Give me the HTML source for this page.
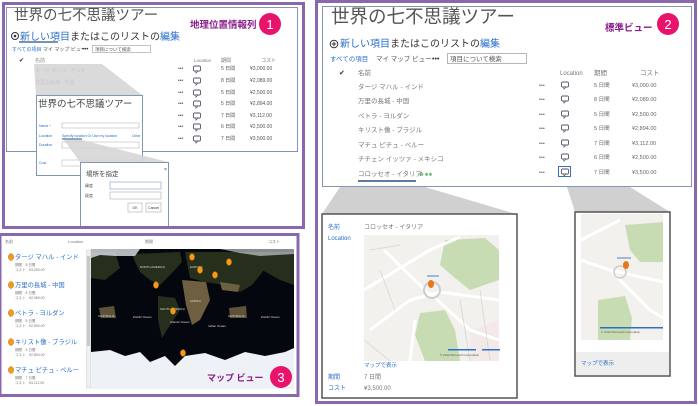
<!DOCTYPE html>
<html><head><meta charset="utf-8"><style>
html,body{margin:0;padding:0;background:#fff;}
svg{display:block;font-family:"Liberation Sans","Noto Sans CJK JP",sans-serif;}
</style></head><body>
<svg width="698" height="406" viewBox="0 0 698 406" xmlns="http://www.w3.org/2000/svg">
<defs>
<g id="bub"><rect x="-3.5" y="-3" width="7" height="5" rx="1" fill="#fff" stroke="#556" stroke-width="0.9"/><path d="M-1 2 L-1 4 L1 2" fill="#fff" stroke="#556" stroke-width="0.8"/></g>
<g id="pin"><ellipse cx="0" cy="0" rx="2.6" ry="3.4" fill="#f39a1a" stroke="#c06a00" stroke-width="0.5"/></g>
</defs>

<!-- ============ PANEL 1 ============ -->
<rect x="3.5" y="3.5" width="300" height="224" fill="#fff" stroke="#8a68ad" stroke-width="3"/>
<rect x="6.5" y="7.5" width="291" height="144" fill="#fff" stroke="#8494b4" stroke-width="1"/>
<text x="14" y="20" font-size="14.5" fill="#555">世界の七不思議ツアー</text>
<text x="190" y="28" font-size="9.5" font-weight="bold" fill="#8a1c8a">地理位置情報列</text>
<circle cx="270" cy="24" r="11" fill="#e8146c"/>
<text x="270" y="29" font-size="13" fill="#fff" text-anchor="middle">1</text>
<circle cx="15" cy="36" r="3.5" fill="none" stroke="#333" stroke-width="1"/><circle cx="15" cy="36" r="1.3" fill="#333"/>
<text x="20" y="40" font-size="10" fill="#333"><tspan fill="#2a6fc9">新しい項目</tspan>またはこのリストの<tspan fill="#2a6fc9">編集</tspan></text>
<line x1="19" y1="42" x2="58" y2="42" stroke="#2c4f82" stroke-width="1.2"/>
<text x="12" y="51" font-size="5" fill="#2a6fc9">すべての項目</text>
<text x="43" y="51" font-size="5" fill="#555">マイ マップ ビュー</text>
<text x="82" y="51" font-size="6" fill="#333">•••</text>
<rect x="92.5" y="45.5" width="58" height="7" fill="#fff" stroke="#999" stroke-width="0.6"/>
<text x="95" y="51" font-size="4.5" fill="#555">項目について検索</text>
<text x="19" y="62" font-size="6" fill="#333">✔</text>
<text x="35" y="62" font-size="5" fill="#888">名前</text>
<text x="194" y="62" font-size="4.5" fill="#777">Location</text>
<text x="221" y="62" font-size="5" fill="#777">期間</text>
<text x="261" y="62" font-size="5" fill="#777">コスト</text>
<g font-size="5" fill="#777">
<text x="35" y="72">タージ マハル - インド</text>
<text x="35" y="84">万里の長城 - 中国</text>
</g>
<g font-size="5" fill="#555">
<g transform="translate(0,70)"><text x="178" y="0">•••</text><use href="#bub" x="197" y="-1"/><text x="221" y="0">5 日間</text><text x="250" y="0">¥3,000.00</text></g>
<g transform="translate(0,82)"><text x="178" y="0">•••</text><use href="#bub" x="197" y="-1"/><text x="221" y="0">8 日間</text><text x="250" y="0">¥2,089.00</text></g>
<g transform="translate(0,94)"><text x="178" y="0">•••</text><use href="#bub" x="197" y="-1"/><text x="221" y="0">5 日間</text><text x="250" y="0">¥2,500.00</text></g>
<g transform="translate(0,105)"><text x="178" y="0">•••</text><use href="#bub" x="197" y="-1"/><text x="221" y="0">5 日間</text><text x="250" y="0">¥2,894.00</text></g>
<g transform="translate(0,117)"><text x="178" y="0">•••</text><use href="#bub" x="197" y="-1"/><text x="221" y="0">7 日間</text><text x="250" y="0">¥3,112.00</text></g>
<g transform="translate(0,128)"><text x="178" y="0">•••</text><use href="#bub" x="197" y="-1"/><text x="221" y="0">6 日間</text><text x="250" y="0">¥2,500.00</text></g>
<g transform="translate(0,140)"><text x="178" y="0">•••</text><use href="#bub" x="197" y="-1"/><text x="221" y="0">7 日間</text><text x="250" y="0">¥3,500.00</text></g>
</g>
<!-- callout 1 -->
<polygon points="34,64 102,64 142,95 36,95" fill="#d4d4d4" opacity="0.85"/>
<rect x="36.5" y="95.5" width="106" height="80" fill="#fff" stroke="#8494b4" stroke-width="1"/>
<text x="38" y="107" font-size="9.5" fill="#444">世界の七不思議ツアー</text>
<g font-size="3.5" fill="#2a6fc9">
<text x="39" y="127">Name *</text><text x="39" y="137">Location</text><text x="39" y="146">Duration</text><text x="39" y="164">Cost</text>
<text x="62" y="137">Specify location Or Use my location</text><text x="132" y="137">Clear</text>
</g>
<rect x="62" y="123" width="77" height="5" fill="#fff" stroke="#aaa" stroke-width="0.5"/>
<rect x="62" y="142" width="77" height="6" fill="#fff" stroke="#aaa" stroke-width="0.5"/>
<rect x="62" y="160" width="77" height="6" fill="#fff" stroke="#aaa" stroke-width="0.5"/>
<line x1="62" y1="139" x2="82" y2="139" stroke="#2c4f82" stroke-width="1"/>
<polygon points="64,140 82,140 168,162 80,162" fill="#d4d4d4" opacity="0.85"/>
<rect x="80.5" y="162.5" width="88" height="64" fill="#fff" stroke="#8494b4" stroke-width="1"/>
<text x="164" y="171" font-size="5" fill="#333">×</text>
<text x="86" y="176" font-size="6.5" fill="#444">場所を指定</text>
<text x="85" y="187" font-size="4" fill="#555">緯度</text>
<text x="85" y="197" font-size="4" fill="#555">経度</text>
<rect x="110" y="182" width="51" height="7" fill="#fff" stroke="#7aa0d0" stroke-width="0.6"/>
<rect x="110" y="192" width="51" height="7" fill="#fff" stroke="#aaa" stroke-width="0.6"/>
<rect x="128" y="203" width="14" height="9" fill="#fff" stroke="#aaa" stroke-width="0.6"/>
<rect x="146" y="203" width="15" height="9" fill="#fff" stroke="#aaa" stroke-width="0.6"/>
<text x="135" y="209" font-size="3.5" fill="#333" text-anchor="middle">OK</text>
<text x="153.5" y="209" font-size="3.5" fill="#333" text-anchor="middle">Cancel</text>
<rect x="3.5" y="3.5" width="300" height="224" fill="none" stroke="#8a68ad" stroke-width="3"/>

<!-- ============ PANEL 3 ============ -->
<rect x="0" y="234.5" width="298" height="161" fill="#fff" stroke="#8a68ad" stroke-width="3"/>
<g font-size="4" fill="#777"><text x="5" y="243">名前</text><text x="68" y="243">Location</text><text x="145" y="243">期間</text><text x="268" y="243">コスト</text></g>
<g font-size="6.3" fill="#2a6fc9">
<text x="15" y="259">タージ マハル - インド</text>
<text x="15" y="287">万里の長城 - 中国</text>
<text x="15" y="315">ペトラ - ヨルダン</text>
<text x="15" y="344">キリスト像 - ブラジル</text>
<text x="15" y="372">マチュ ピチュ - ペルー</text>
</g>
<g><use href="#pin" x="11" y="257"/><use href="#pin" x="11" y="285"/><use href="#pin" x="11" y="313"/><use href="#pin" x="11" y="342"/><use href="#pin" x="11" y="370"/></g>
<g font-size="3.5" fill="#777">
<text x="15" y="266">期間　5 日間</text><text x="15" y="271">コスト　¥3,000.00</text>
<text x="15" y="294">期間　8 日間</text><text x="15" y="299">コスト　¥2,089.00</text>
<text x="15" y="322">期間　5 日間</text><text x="15" y="327">コスト　¥2,500.00</text>
<text x="15" y="351">期間　5 日間</text><text x="15" y="356">コスト　¥2,894.00</text>
<text x="15" y="379">期間　7 日間</text><text x="15" y="384">コスト　¥3,112.00</text>
</g>
<rect x="86.5" y="250" width="4" height="138" fill="#f0f0f0" stroke="#ccc" stroke-width="0.5"/>
<rect x="87" y="256" width="3" height="90" fill="#c8c8c8"/>
<!-- map -->
<rect x="91" y="249" width="203" height="140" fill="#05070f"/>
<g fill="#262e1c">
<path d="M132 254 L180 252 L182 262 L170 275 L160 285 L150 280 L140 272 L135 262 Z"/>
<path d="M158 296 L175 298 L180 310 L170 325 L162 338 L158 320 Z"/>
<path d="M185 252 L262 252 L264 270 L252 285 L240 292 L225 285 L205 282 L190 278 Z"/>
<path d="M250 252 L294 252 L294 285 L280 280 L262 270 Z"/>
<path d="M91 252 L115 252 L120 268 L105 280 L91 278 Z"/>
</g>
<path d="M182 280 L206 282 L210 300 L200 320 L192 325 L186 305 Z" fill="#6e5f40"/>
<path d="M220 282 L240 285 L238 292 L222 290 Z" fill="#6e5f40"/>
<path d="M99 308 L114 306 L116 318 L101 318 Z" fill="#5e5238"/>
<path d="M229 308 L246 306 L247 318 L230 318 Z" fill="#5e5238"/>
<path d="M91 352 L110 350 L125 356 L140 352 L150 362 L165 356 L175 366 L185 356 L205 353 L225 360 L245 352 L265 356 L285 352 L294 348 L294 389 L91 389 Z" fill="#eef1f6"/>
<path d="M91 249 L140 249 L135 256 L115 256 L100 255 L91 258 Z" fill="#dfe4ea" opacity="0.8"/>
<path d="M220 249 L294 249 L294 254 L260 256 L240 253 Z" fill="#dfe4ea" opacity="0.6"/>
<g font-size="3" fill="#ddd"><text x="140" y="268">NORTH AMERICA</text><text x="190" y="268">EUROPE</text><text x="190" y="302">AFRICA</text><text x="160" y="310">SOUTH AMERICA</text><text x="98" y="317">AUSTRALIA</text><text x="228" y="317">AUSTRALIA</text><text x="133" y="318">Pacific Ocean</text><text x="170" y="323">Atlantic Ocean</text><text x="208" y="327">Indian Ocean</text><text x="261" y="318">Pacific Ocean</text></g>
<g><use href="#pin" x="156" y="285"/><use href="#pin" x="192" y="257"/><use href="#pin" x="200" y="270"/><use href="#pin" x="215" y="275"/><use href="#pin" x="229" y="262"/><use href="#pin" x="173" y="311"/><use href="#pin" x="183" y="353"/></g>
<text x="207" y="381" font-size="9" font-weight="bold" fill="#8a1c8a">マップ ビュー</text>
<circle cx="281" cy="377" r="11" fill="#e8146c"/>
<text x="281" y="382" font-size="13" fill="#fff" text-anchor="middle">3</text>

<!-- ============ PANEL 2 ============ -->
<rect x="316.5" y="1.5" width="379" height="401" fill="#fff" stroke="#8a68ad" stroke-width="3"/>
<rect x="322.5" y="6.5" width="369" height="180" fill="#fff" stroke="#8494b4" stroke-width="1"/>
<text x="331" y="23" font-size="18.5" fill="#555">世界の七不思議ツアー</text>
<text x="605" y="31" font-size="9.5" font-weight="bold" fill="#8a1c8a">標準ビュー</text>
<circle cx="668" cy="24" r="11" fill="#e8146c"/>
<text x="668" y="29" font-size="13" fill="#fff" text-anchor="middle">2</text>
<circle cx="334" cy="44" r="3.8" fill="none" stroke="#333" stroke-width="1"/>
<path d="M334 41.8v4.4M331.8 44h4.4" stroke="#333" stroke-width="1"/>
<text x="340" y="47" font-size="10" fill="#333"><tspan fill="#2a6fc9">新しい項目</tspan>またはこのリストの<tspan fill="#2a6fc9">編集</tspan></text>
<text x="330" y="61" font-size="6.5" fill="#2a6fc9">すべての項目</text>
<text x="376" y="61" font-size="6.5" fill="#555">マイ マップ ビュー</text>
<text x="432" y="61" font-size="7" fill="#333">•••</text>
<rect x="447.5" y="53.5" width="79" height="10" fill="#fff" stroke="#999" stroke-width="0.7"/>
<text x="450" y="61" font-size="6.5" fill="#555">項目について検索</text>
<text x="339" y="75" font-size="7" fill="#333">✔</text>
<text x="358" y="75" font-size="6.5" fill="#777">名前</text>
<text x="560" y="75" font-size="6" fill="#777">Location</text>
<text x="594" y="75" font-size="6.5" fill="#777">期間</text>
<text x="640" y="75" font-size="6.5" fill="#777">コスト</text>
<g font-size="6.5" fill="#777">
<text x="358" y="89">タージ マハル - インド</text>
<text x="358" y="103">万里の長城 - 中国</text>
<text x="358" y="118">ペトラ - ヨルダン</text>
<text x="358" y="132">キリスト像 - ブラジル</text>
<text x="358" y="147">マチュ ピチュ - ペルー</text>
<text x="358" y="161">チチェン イッツァ - メキシコ</text>
<text x="358" y="176">コロッセオ - イタリア</text>
</g>
<text x="419" y="176" font-size="4.5" fill="#5a5">✿ ✱✱</text>
<g font-size="5.5" fill="#666">
<g transform="translate(0,87)"><text x="539" y="0">•••</text><use href="#bub" x="565" y="-2"/><text x="594" y="0">5 日間</text><text x="632" y="0">¥3,000.00</text></g>
<g transform="translate(0,101)"><text x="539" y="0">•••</text><use href="#bub" x="565" y="-2"/><text x="594" y="0">8 日間</text><text x="632" y="0">¥2,089.00</text></g>
<g transform="translate(0,116)"><text x="539" y="0">•••</text><use href="#bub" x="565" y="-2"/><text x="594" y="0">5 日間</text><text x="632" y="0">¥2,500.00</text></g>
<g transform="translate(0,130)"><text x="539" y="0">•••</text><use href="#bub" x="565" y="-2"/><text x="594" y="0">5 日間</text><text x="632" y="0">¥2,894.00</text></g>
<g transform="translate(0,145)"><text x="539" y="0">•••</text><use href="#bub" x="565" y="-2"/><text x="594" y="0">7 日間</text><text x="632" y="0">¥3,112.00</text></g>
<g transform="translate(0,159)"><text x="539" y="0">•••</text><use href="#bub" x="565" y="-2"/><text x="594" y="0">6 日間</text><text x="632" y="0">¥2,500.00</text></g>
<g transform="translate(0,174)"><text x="539" y="0">•••</text><use href="#bub" x="565" y="-2"/><text x="594" y="0">7 日間</text><text x="632" y="0">¥3,500.00</text></g>
</g>
<rect x="558.5" y="166.5" width="12" height="10" fill="none" stroke="#3a6fc0" stroke-width="1"/>
<line x1="358" y1="181" x2="416" y2="181" stroke="#2c4f82" stroke-width="1.5"/>
<!-- callouts -->
<polygon points="340,187 425,187 516,214 322,214" fill="#d0d0d0"/>
<polygon points="567,187 630,187 670,212 575,212" fill="#d0d0d0"/>
<!-- left card -->
<rect x="322" y="214" width="195" height="184" fill="#fff" stroke="#555" stroke-width="1.5"/>
<text x="328" y="229" font-size="6" fill="#2a6fc9">名前</text>
<text x="364" y="229" font-size="6" fill="#777">コロッセオ - イタリア</text>
<text x="328" y="240" font-size="6" fill="#2a6fc9">Location</text>
<rect x="364" y="235" width="135" height="126" fill="#f2f1ee"/>
<path d="M445 240 L485 238 L499 250 L499 280 L470 290 L455 278 L440 265 Z" fill="#c8dcb4"/>
<path d="M420 313 L445 310 L455 330 L460 361 L425 361 L415 335 Z" fill="#c8dcb4"/>
<path d="M470 330 L499 320 L499 361 L470 361 Z" fill="#f3e9e9"/>
<g stroke="#fff" stroke-width="3" fill="none">
<path d="M364 290 L400 268 L430 250 L460 237"/>
<path d="M370 330 L410 300 L440 292 L499 300"/>
<path d="M430 293 L470 330 L499 340"/>
<path d="M415 320 L410 361"/>
<path d="M384 250 L430 295"/>
</g>
<g stroke="#d8d6d0" stroke-width="0.8" fill="none">
<path d="M370 250 L400 245 M380 270 L395 310 M460 300 L470 361 M480 290 L490 361 M364 340 L390 361"/>
</g>
<circle cx="432" cy="290" r="8" fill="none" stroke="#ccc" stroke-width="2"/>
<ellipse cx="431" cy="284" rx="3" ry="4" fill="#e8781a"/>
<rect x="427" y="275" width="12" height="2" fill="#9cb7e0"/>
<rect x="482" y="349" width="18" height="1.5" fill="#2a6fc9"/><rect x="448" y="349" width="28" height="1.5" fill="#2a6fc9"/>
<text x="440" y="356" font-size="3" fill="#555">© 2012 Microsoft Corporation</text>
<text x="364" y="367" font-size="5.5" fill="#2a6fc9">マップで表示</text>
<text x="328" y="379" font-size="6" fill="#2a6fc9">期間</text>
<text x="364" y="379" font-size="6" fill="#777">7 日間</text>
<text x="328" y="390" font-size="6" fill="#2a6fc9">コスト</text>
<text x="364" y="390" font-size="6" fill="#777">¥3,500.00</text>
<!-- right card -->
<rect x="575" y="212" width="95" height="164" fill="#fff" stroke="#555" stroke-width="1.5"/>
<rect x="581" y="214" width="82" height="126" fill="#f2f1ee"/>
<path d="M625 225 L663 222 L663 262 L640 262 L630 250 Z" fill="#c8dcb4"/>
<path d="M598 300 L625 296 L632 318 L630 340 L598 340 Z" fill="#c8dcb4"/>
<g stroke="#fff" stroke-width="3" fill="none">
<path d="M581 240 L620 220 M581 260 L610 270 L663 282 M612 272 L650 310 L663 318"/>
</g>
<circle cx="620" cy="272" r="6" fill="none" stroke="#ccc" stroke-width="1.5"/>
<ellipse cx="626" cy="265" rx="3" ry="4" fill="#e8781a"/>
<rect x="617" y="257" width="14" height="2" fill="#9cb7e0"/>
<rect x="600" y="327" width="63" height="1.5" fill="#2a6fc9"/>
<text x="601" y="333" font-size="3" fill="#555">© 2012 Microsoft Corporation</text>
<rect x="576" y="352" width="93" height="23" fill="#eeeeee"/>
<text x="581" y="365" font-size="5.5" fill="#2a6fc9">マップで表示</text>
<rect x="316.5" y="1.5" width="379" height="401" fill="none" stroke="#8a68ad" stroke-width="3"/>
</svg>
</body></html>
